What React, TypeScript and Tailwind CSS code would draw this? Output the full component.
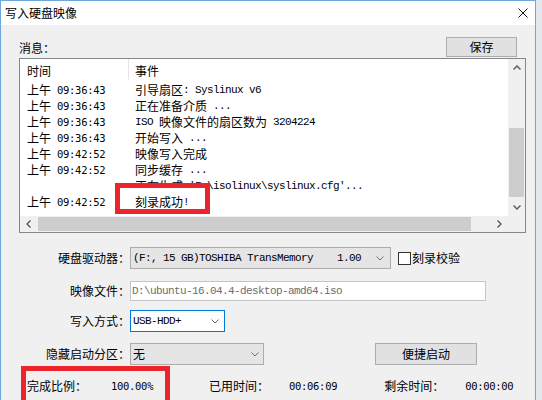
import React from "react";

const cjk = "font-['Noto_Sans_CJK_SC',sans-serif]";
const mono = "font-['Liberation_Mono','Noto_Sans_CJK_SC',monospace] text-[11px] tracking-[-0.6px]";
const sansMono = "font-['DejaVu_Sans_Mono','Noto_Sans_CJK_SC',monospace] text-[10.5px] tracking-[-0.3px]";

const log: [string, string][] = [
  ["09:36:43", "引导扇区: Syslinux v6"],
  ["09:36:43", "正在准备介质 ..."],
  ["09:36:43", "ISO 映像文件的扇区数为 3204224"],
  ["09:36:43", "开始写入 ..."],
  ["09:42:52", "映像写入完成"],
  ["09:42:52", "同步缓存 ..."],
  ["", "正在生成 'F:\\isolinux\\syslinux.cfg'..."],
  ["09:42:52", "刻录成功!"],
];

// ASCII runs in a half-width mono face, CJK runs at full width (like SimSun)
function Mixed({ text }: { text: string }) {
  const parts = text.match(/[\x00-\x7F]+|[^\x00-\x7F]+/g) ?? [];
  return (
    <span className="whitespace-pre">
      {parts.map((p, i) =>
        /^[\x00-\x7F]/.test(p) ? (
          <span key={i} className={`${mono} inline-block h-[16px] leading-[16px] align-top`}>
            {p}
          </span>
        ) : (
          <span key={i} className={`${cjk} text-[12px] inline-block h-[16px] leading-[16px] align-top`}>
            {p}
          </span>
        )
      )}
    </span>
  );
}

function Chevron({ up = false, color = "#606060", w = 1.5 }: { up?: boolean; color?: string; w?: number }) {
  return (
    <svg width="8" height="5" viewBox="0 0 8 5">
      <path
        d={up ? "M0.5 4.5 L4 1 L7.5 4.5" : "M0.5 0.5 L4 4 L7.5 0.5"}
        fill="none"
        stroke={color}
        strokeWidth={w}
      />
    </svg>
  );
}

function SideArrow({ right = false }: { right?: boolean }) {
  return (
    <svg width="5" height="8" viewBox="0 0 5 8">
      <path
        d={right ? "M0.5 0.5 L4 4 L0.5 7.5" : "M4.5 0.5 L1 4 L4.5 7.5"}
        fill="none"
        stroke="#606060"
        strokeWidth={1.5}
      />
    </svg>
  );
}

function Label({ children }: { children: React.ReactNode }) {
  return <div className={`${cjk} w-[111px] text-right text-[12px] leading-[16px]`}>{children}</div>;
}

export default function App() {
  return (
    <div className="w-[542px] h-[400px] overflow-hidden flex bg-[#e3e8ee] text-black">
      <div className="w-[536px] h-[400px] shrink-0 flex flex-col border-l border-t border-r border-[#6ea8d9] bg-[#f0f0f0]">
        {/* Title bar */}
        <div className="h-[24px] shrink-0 bg-white flex items-center justify-between pl-[4px] pr-[7px]">
          <span className={`${cjk} text-[12px] leading-[16px]`}>写入硬盘映像</span>
          <svg width="10" height="10" viewBox="0 0 10 10">
            <path d="M0.5 0.5 L9.5 9.5 M9.5 0.5 L0.5 9.5" stroke="#111" strokeWidth="1" />
          </svg>
        </div>

        <div className="flex-1 pl-[18px] pt-[12px]">
          {/* Messages header */}
          <div className="w-[507px] h-[20px] flex items-center">
            <span className={`${cjk} text-[12px] leading-[16px] mt-[2px]`}>消息：</span>
            <button className={`${cjk} ml-auto mr-[9px] w-[71px] h-[20px] text-[12px] leading-[16px] bg-[#e1e1e1] border border-[#adadad]`}>
              保存
            </button>
          </div>

          {/* Log list */}
          <div className="mt-[1px] w-[507px] h-[175px] border border-[#828790] bg-white flex flex-col">
            <div className="h-[157px] flex">
              <div className="relative flex-1">
                <div className="h-[23px] flex">
                  <div className={`${cjk} w-[108px] pl-[7px] flex items-center text-[12px]`}>时间</div>
                  <div className="w-px h-[21px] bg-[#e5e5e5]" />
                  <div className={`${cjk} pl-[6px] flex items-center text-[12px]`}>事件</div>
                </div>
                {log.map(([time, event], i) => (
                  <div
                    key={i}
                    className={`h-[16px] flex items-center leading-[16px] ${i === log.length - 1 ? "relative z-[2]" : ""}`}
                  >
                    <div className="w-[109px] pl-[7px] whitespace-pre">
                      {time && (
                        <>
                          <span className={`${cjk} text-[12px] inline-block h-[16px] align-top`}>上午</span>
                          <span className={`${sansMono} inline-block h-[16px] align-top`}> {time}</span>
                        </>
                      )}
                    </div>
                    <div className="pl-[6px]">
                      <Mixed text={event} />
                    </div>
                  </div>
                ))}
                {/* Red annotation box */}
                <div className="absolute left-[95px] top-[124px] w-[95px] h-[31px] border-[5px] border-[#eb252b] bg-white z-[1]" />
              </div>

              {/* Vertical scrollbar */}
              <div className="w-[17px] bg-[#f0f0f0] flex flex-col">
                <div className="h-[17px] flex items-center justify-center">
                  <Chevron up />
                </div>
                <div className="h-[52px]" />
                <div className="mx-[1px] h-[69px] bg-[#cdcdcd]" />
                <div className="h-[2px]" />
                <div className="h-[17px] flex items-center justify-center">
                  <Chevron />
                </div>
              </div>
            </div>

            {/* Horizontal scrollbar */}
            <div className="h-[16px] flex bg-[#f0f0f0]">
              <div className="w-[17px] flex items-center justify-center">
                <SideArrow />
              </div>
              <div className="ml-[1px] w-[433px] h-[14px] self-center bg-[#cdcdcd]" />
              <div className="flex-1" />
              <div className="w-[17px] flex items-center justify-center">
                <SideArrow right />
              </div>
              <div className="w-[17px]" />
            </div>
          </div>

          {/* Drive */}
          <div className="mt-[14px] h-[22px] flex items-center">
            <Label>硬盘驱动器：</Label>
            <div className="w-[261px] h-[22px] border border-[#adadad] bg-[#e5e5e5] flex items-center pl-[2px] pr-[6px]">
              <span className={`${mono} whitespace-pre`}>(F:, 15 GB)TOSHIBA TransMemory    1.00</span>
              <span className="ml-auto flex">
                <Chevron color="#707070" w={1} />
              </span>
            </div>
            <div className="ml-[7px] w-[13px] h-[13px] border border-[#333] bg-white" />
            <span className={`${cjk} ml-[1px] text-[12px] leading-[16px]`}>刻录校验</span>
          </div>

          {/* Image file */}
          <div className="mt-[12px] h-[20px] flex items-center">
            <Label>映像文件：</Label>
            <div className="w-[356px] h-[20px] border border-[#c5c5c5] bg-white flex items-center pl-[1px]">
              <span className={`${mono} text-[#6d6d6d]`}>D:\ubuntu-16.04.4-desktop-amd64.iso</span>
            </div>
          </div>

          {/* Write mode */}
          <div className="mt-[9px] h-[22px] flex items-center">
            <Label>写入方式：</Label>
            <div className="w-[95px] h-[22px] border border-[#0078d7] bg-white flex items-center pl-[2px] pr-[5px]">
              <span className={mono}>USB-HDD+</span>
              <span className="ml-auto flex">
                <Chevron color="#707070" w={1} />
              </span>
            </div>
          </div>

          {/* Hidden partition */}
          <div className="mt-[11px] h-[22px] flex items-center">
            <Label>隐藏启动分区：</Label>
            <div className="w-[134px] h-[22px] border border-[#adadad] bg-[#e5e5e5] flex items-center pl-[2px] pr-[4px]">
              <span className={`${cjk} text-[12px] leading-[16px]`}>无</span>
              <span className="ml-auto flex">
                <Chevron color="#707070" w={1} />
              </span>
            </div>
            <button className={`${cjk} ml-[111px] w-[102px] h-[22px] text-[12px] leading-[16px] bg-[#e1e1e1] border border-[#adadad]`}>
              便捷启动
            </button>
          </div>

          {/* Progress */}
          <div className="mt-[1px] flex items-start">
            <div className="ml-[2px] w-[149px] h-[40px] border-[5px] border-[#eb252b] flex items-start pt-[7px] pl-[1px]">
              <span className={`${cjk} w-[60px] text-[12px] leading-[16px]`}>完成比例：</span>
              <span className={`${sansMono} ml-[24px] leading-[16px]`}>100.00%</span>
            </div>
            <span className={`${cjk} ml-[39px] mt-[12px] w-[60px] text-[12px] leading-[16px]`}>已用时间：</span>
            <span className={`${sansMono} ml-[20px] mt-[12px] leading-[16px]`}>00:06:09</span>
            <span className={`${cjk} ml-[47px] mt-[12px] w-[60px] text-[12px] leading-[16px]`}>剩余时间：</span>
            <span className={`${sansMono} ml-[21px] mt-[12px] leading-[16px]`}>00:00:00</span>
          </div>
        </div>
      </div>
      <div className="flex-1" />
    </div>
  );
}
